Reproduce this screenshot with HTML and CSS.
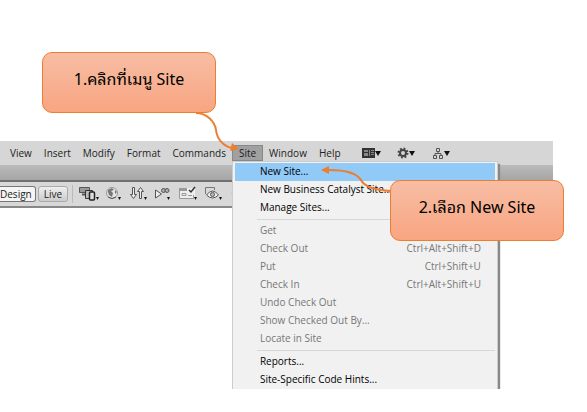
FILE: index.html
```html
<!DOCTYPE html>
<html lang="th">
<head>
<meta charset="utf-8">
<title>New Site</title>
<link rel="stylesheet" href="styles.css">
</head>
<body>
<main class="guide">
  <div class="app">
    <nav class="menubar">
      <button class="menu">View</button>
      <button class="menu">Insert</button>
      <button class="menu">Modify</button>
      <button class="menu">Format</button>
      <button class="menu">Commands</button>
      <div class="menu-host">
        <button class="menu open">Site</button>
        <div class="dropdown">
          <button class="item active"><span>New Site...</span></button>
          <button class="item"><span>New Business Catalyst Site...</span></button>
          <button class="item"><span>Manage Sites...</span></button>
          <hr class="sep">
          <button class="item" disabled><span>Get</span></button>
          <button class="item" disabled><span>Check Out</span><span>Ctrl+Alt+Shift+D</span></button>
          <button class="item" disabled><span>Put</span><span>Ctrl+Shift+U</span></button>
          <button class="item" disabled><span>Check In</span><span>Ctrl+Alt+Shift+U</span></button>
          <button class="item" disabled><span>Undo Check Out</span></button>
          <button class="item" disabled><span>Show Checked Out By...</span></button>
          <button class="item" disabled><span>Locate in Site</span></button>
          <hr class="sep">
          <button class="item"><span>Reports...</span></button>
          <button class="item"><span>Site-Specific Code Hints...</span></button>
        </div>
      </div>
      <button class="menu">Window</button>
      <button class="menu">Help</button>
      <div class="quick">
        <button class="tool" aria-label="Layout">
          <svg width="20" height="12" viewBox="0 0 20 12"><path d="M0 1h13v10H0z" fill="#333"/><path d="M2 3h4v2H2zM2 6h4v3H2zM7 3h1v6H7zM9 3h3v1H9zM9 5h3v1H9zM9 7h3v1H9z" fill="#888"/><path d="M13 4h6l-3 5z" fill="#111"/></svg>
        </button>
        <button class="tool" aria-label="Extend">
          <svg width="20" height="12" viewBox="0 0 20 12"><circle cx="6" cy="6" r="3" fill="none" stroke="#444" stroke-width="2"/><circle cx="6" cy="6" r="4.5" fill="none" stroke="#444" stroke-width="2" stroke-dasharray="1.8 1.73"/><path d="M12 4h6l-3 5z" fill="#111"/></svg>
        </button>
        <button class="tool" aria-label="Site">
          <svg width="20" height="12" viewBox="0 0 20 12"><path d="M4.500 1.500h3v3h-3zM1.500 8.500h3v3h-3zM7.500 8.500h3v3h-3zM6 5v2M3 8V6.500h6V8" fill="none" stroke="#555"/><path d="M12 4h6l-3 5z" fill="#111"/></svg>
        </button>
      </div>
    </nav>
    <div class="strip"></div>
    <div class="toolbar">
      <button class="mode selected">Design</button>
      <button class="mode">Live</button>
      <div class="tools">
        <button class="tool" aria-label="Devices">
          <svg width="20" height="18" viewBox="0 0 20 18"><path d="M.500 2.500h10v5H.500z" fill="#999" stroke="#555"/><path d="M3 9.500h3" stroke="#555" stroke-width="2"/><path d="M6.500 5.500h7v8h-7z" fill="#bbb" stroke="#333"/><rect x="10.500" y="7" width="5" height="8" rx="1" fill="#ddd" stroke="#222" stroke-width="1.500"/><path d="M17 12h3l-1.500 3z" fill="#111"/></svg>
        </button>
        <button class="tool" aria-label="Preview">
          <svg width="20" height="18" viewBox="0 0 20 18"><circle cx="8" cy="8" r="5.500" fill="#e4e4e4" stroke="#999"/><path d="M4 5l4-2 2 2-3 1 2 2-1 4-3-2-1-3zM11 5l2 2-2 2z" fill="#777"/><path d="M4 12q4 3 8 0" stroke="#555" fill="none"/><path d="M14 12h3l-1.500 3z" fill="#111"/></svg>
        </button>
        <button class="tool" aria-label="File management">
          <svg width="20" height="18" viewBox="0 0 20 18"><path d="M3.500 2.500h2v7h2l-3 4-3-4h2zM10.500 13.500v-7h-2l3-4 3 4h-2v7z" fill="#eee" stroke="#555"/><path d="M15 12h3l-1.500 3z" fill="#111"/></svg>
        </button>
        <button class="tool" aria-label="Validation">
          <svg width="20" height="18" viewBox="0 0 20 18"><path d="M1.500 5v8l6-4z" fill="#eee" stroke="#555"/><circle cx="9.500" cy="5.500" r="2" fill="#aaa" stroke="#555"/><circle cx="13" cy="5.500" r="2" fill="#aaa" stroke="#555"/><path d="M13 12h3l-1.500 3z" fill="#111"/></svg>
        </button>
        <button class="tool" aria-label="Options">
          <svg width="20" height="18" viewBox="0 0 20 18"><path d="M0 3h16v11H0z" fill="#eee"/><path d="M0 3h8v3H0z" fill="#999"/><path d="M.500 3v10.500h14V10M3 8.500h4v2H3zM9 10.500h4" fill="none" stroke="#999"/><path d="M10 5l2 2 4-5" fill="none" stroke="#333" stroke-width="1.500"/><path d="M15 12h3l-1.500 3z" fill="#111"/></svg>
        </button>
        <button class="tool" aria-label="Visual aids">
          <svg width="20" height="18" viewBox="0 0 20 18"><path d="M1.500 9V2.500h9V5" fill="none" stroke="#777"/><path d="M2.500 10q6-8 12 0-6 6-12 0z" fill="#eee" stroke="#555"/><circle cx="8.500" cy="9.500" r="2" fill="#bbb" stroke="#555"/><path d="M15 12h3l-1.500 3z" fill="#111"/></svg>
        </button>
        <button class="tool" aria-label="Refresh">
          <svg width="20" height="18" viewBox="0 0 20 18"><circle cx="9" cy="8" r="6" fill="#ccc" stroke="#bbb"/></svg>
        </button>
      </div>
    </div>
  </div>
  <svg class="arrows" width="587" height="412" viewBox="0 0 587 412" fill="none" stroke="#ed7d31" stroke-width="2" aria-hidden="true">
    <path d="M196 113C207 113 215 122 216 130C217 139 223 146 232 148"/>
    <path d="M239 149l-7-6-2 8z" fill="#ed7d31" stroke="none"/>
    <path d="M391 191C373 190 364 186 361 180C356 172 342 170 329 170"/>
    <path d="M321 170l8-4v8z" fill="#ed7d31" stroke="none"/>
  </svg>
  <p class="callout first">1.คลิกที่เมนู Site</p>
  <p class="callout second">2.เลือก New Site</p>
</main>
</body>
</html>
```
FILE: styles.css
```css
* { box-sizing: border-box; }
body {
  margin: 0;
  background: #fff;
  color: #222;
  font: 10px/18px "Open Sans", "Noto Sans", sans-serif;
}
button {
  margin: 0;
  padding: 0;
  border: 0;
  background: none;
  color: inherit;
  font: inherit;
}
svg { display: block; }
.guide {
  position: relative;
  min-height: 100vh;
  padding-top: 141px;
}
.app { margin-right: 34px; }
.menubar {
  display: flex;
  align-items: center;
  height: 24px;
  padding-left: 4px;
  background: #d6d6d6;
}
.menu {
  height: 16px;
  padding: 0 6px;
  line-height: 16px;
  white-space: nowrap;
}
.menu-host { position: relative; }
.menu.open {
  display: block;
  padding: 0 6px;
  border: 1px solid #888;
  background: #a0a0a0;
  line-height: 14px;
}
.quick {
  display: flex;
  gap: 15px;
  margin-left: 15px;
}
.dropdown {
  position: absolute;
  top: 16px;
  left: 0;
  width: 266px;
  padding: 1px 2px 0;
  border: 1px solid #ccc;
  border-bottom: 0;
  background: #f1f1f1;
  box-shadow: 2px 3px 1px #888;
  clip-path: inset(0 -3px 0 0);
}
.item {
  display: flex;
  justify-content: space-between;
  width: 100%;
  height: 18px;
  padding: 0 14px 0 25px;
  color: #000;
  line-height: 17px;
  white-space: nowrap;
}
.item.active { background: #91c9f7; }
.item:disabled { color: #777; }
.sep {
  height: 1px;
  margin: 2px 0 2px 22px;
  border: 0;
  background: #d7d7d7;
}
.strip {
  height: 17px;
  border-bottom: 2px solid #707070;
  background: linear-gradient(#bbb, #a5a5a5);
}
.toolbar {
  display: flex;
  align-items: center;
  height: 26px;
  border-bottom: 2px solid #888;
  background: #d8d8d8;
}
.mode {
  height: 16px;
  margin-right: 2px;
  padding: 0 5px;
  border: 1px solid #aaa;
  border-radius: 3px;
  background: linear-gradient(#eee, #ccc);
  line-height: 14px;
}
.mode.selected {
  padding: 0 3px 0 0;
  border-color: #777;
  border-left: 0;
  border-radius: 0 3px 3px 0;
  background: #f5f5f5;
}
.tools {
  display: flex;
  gap: 5px;
  margin-left: 2px;
  padding-left: 6px;
  border-left: 1px solid #bbb;
}
.arrows {
  position: absolute;
  top: 0;
  left: 0;
}
.callout {
  position: absolute;
  display: flex;
  align-items: center;
  justify-content: center;
  width: 174px;
  height: 61px;
  margin: 0;
  padding-bottom: 8px;
  border: 1px solid #ed7d31;
  border-radius: 10px;
  background: linear-gradient(#f7bda4, #f8a581);
  color: #000;
  font: 16px/24px "Noto Sans", "Noto Sans Thai Looped", "Loma", "Noto Sans Thai", sans-serif;
  white-space: nowrap;
}
.first { top: 52px; left: 42px; }
.second { top: 180px; left: 390px; }
```
